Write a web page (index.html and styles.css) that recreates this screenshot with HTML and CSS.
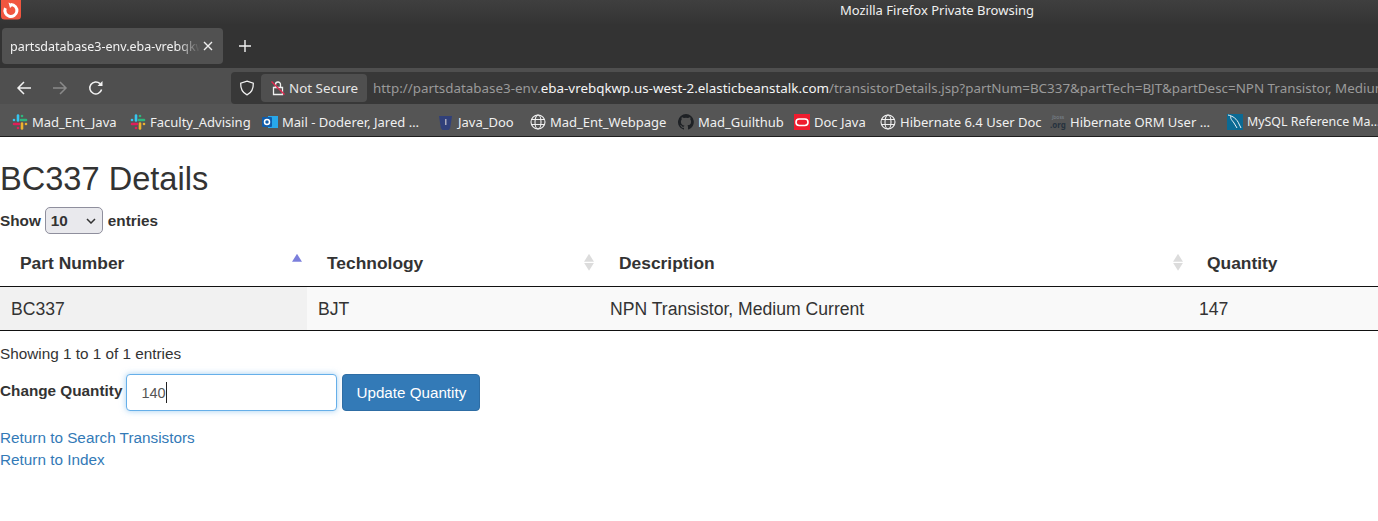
FILE: index.html
```html
<!DOCTYPE html>
<html lang="en">

<head>
    <meta charset="UTF-8">
    <title>partsdatabase3-env.eba-vrebqkwp.us-west-2.elasticbeanstalk.com</title>
    <link rel="stylesheet" href="styles.css">
</head>

<body>
    <header class="browser">
        <div class="titlebar">
            <svg class="app-icon" viewBox="0 0 22 20" width="22" height="20">
                <rect x="1" y="-4" width="20" height="23.5" rx="3.5" fill="#f1563f"/>
                <path d="M11 4.500a6 6 0 1 1-5.600 3.600" fill="none" stroke="#fff" stroke-width="3"/>
                <path d="M8.500 2.500l5 2.200-3.500 3.300z" fill="#fff"/>
            </svg>
            <span class="window-title">Mozilla Firefox Private Browsing</span>
        </div>
        <div class="tabstrip">
            <div class="tab">
                <span class="tab-label">partsdatabase3-env.eba-vrebqkwp.us-west-2.elasticbeanstalk.com</span>
                <svg viewBox="0 0 10 10" width="10" height="10"><path d="M1 1l8 8M9 1l-8 8" stroke="#eee" stroke-width="1.400"/></svg>
            </div>
            <svg class="new-tab" viewBox="0 0 12 12" width="12" height="12"><path d="M6 0v12M0 6h12" stroke="#f2f2f2" stroke-width="1.400"/></svg>
        </div>
        <div class="navbar">
            <svg class="nav-btn" viewBox="0 0 16 16" width="16" height="16"><path d="M15 8H2M8 2L2 8l6 6" fill="none" stroke="#f2f2f2" stroke-width="1.500"/></svg>
            <svg class="nav-btn" viewBox="0 0 16 16" width="16" height="16"><path d="M1 8h13M8 2l6 6-6 6" fill="none" stroke="#8a8a8a" stroke-width="1.500"/></svg>
            <svg class="nav-btn" viewBox="0 0 16 16" width="16" height="16"><path d="M13.600 9.500A6 6 0 1 1 12 3.600" fill="none" stroke="#f2f2f2" stroke-width="1.500"/><path d="M14.500 1v5h-5z" fill="#f2f2f2"/></svg>
            <div class="urlbar">
                <svg class="shield" viewBox="0 0 16 16" width="16" height="16"><path d="M8 1.200l6.300 2c.2 5.500-1.800 9.500-6.300 11.600C3.500 12.700 1.500 8.700 1.700 3.200z" fill="none" stroke="#f0f0f0" stroke-width="1.300"/></svg>
                <div class="not-secure">
                    <svg viewBox="0 0 16 16" width="16" height="16"><path d="M3.500 7.500h9v7h-9zM5.500 7.500V4.500a2.500 2.500 0 0 1 5 0v3" fill="none" stroke="#f0f0f0" stroke-width="1.300"/><path d="M1.500 1.500l13 13" stroke="#e22850" stroke-width="1.400"/></svg>
                    <span>Not Secure</span>
                </div>
                <div class="url">http://partsdatabase3-env.<b>eba-vrebqkwp.us-west-2.elasticbeanstalk.com</b>/transistorDetails.jsp?partNum=BC337&amp;partTech=BJT&amp;partDesc=NPN Transistor, Medium</div>
            </div>
        </div>
        <nav class="bookmarks">
            <a class="mark w-119"><svg viewBox="0 0 16 16" width="16" height="16"><use href="#slack"/></svg>Mad_Ent_Java</a>
            <a class="mark w-132"><svg viewBox="0 0 16 16" width="16" height="16"><use href="#slack"/></svg>Faculty_Advising</a>
            <a class="mark w-176"><svg viewBox="0 0 16 16" width="16" height="16"><rect x="6" y="2" width="10" height="12" fill="#28a8ea"/><rect x="0" y="3" width="10" height="10" rx="1" fill="#0f5cab"/><circle cx="5" cy="8" r="2.500" fill="none" stroke="#fff" stroke-width="1.500"/></svg>Mail - Doderer, Jared …</a>
            <a class="mark w-91"><svg viewBox="0 0 16 16" width="16" height="16"><path d="M1 2h13l-1.500 10a5 5 0 0 1-10 0z" fill="#31407a"/><rect x="7" y="5" width="1.500" height="6" fill="#aab"/></svg>Java_Doo</a>
            <a class="mark w-149"><svg viewBox="0 0 16 16" width="16" height="16"><use href="#globe"/></svg>Mad_Ent_Webpage</a>
            <a class="mark w-116"><svg viewBox="0 0 16 16" width="16" height="16"><path d="M8 0a8 8 0 0 0-2.500 15.600c.4.100.5-.2.500-.4v-1.400c-2.200.5-2.700-1-2.700-1-.4-.9-.9-1.200-.9-1.200-.7-.5.100-.5.100-.5.800.1 1.200.8 1.200.8.700 1.200 1.900.9 2.300.7.100-.5.300-.9.500-1.100-1.800-.2-3.600-.9-3.600-4 0-.9.300-1.600.8-2.100-.1-.2-.4-1 .1-2.100 0 0 .7-.2 2.200.8a7.600 7.600 0 0 1 4 0c1.500-1 2.200-.8 2.200-.8.500 1.100.2 1.900.1 2.100.5.600.8 1.300.8 2.100 0 3.100-1.900 3.700-3.700 3.900.3.300.6.800.6 1.500v2.200c0 .2.100.5.600.4A8 8 0 0 0 8 0z" fill="#1e2125"/></svg>Mad_Guilthub</a>
            <a class="mark w-86"><svg viewBox="0 0 16 16" width="16" height="16"><rect width="16" height="16" fill="#ee1c2e"/><rect x="2" y="5" width="12" height="6.500" rx="3.200" fill="none" stroke="#fff" stroke-width="1.600"/></svg>Doc Java</a>
            <a class="mark w-170"><svg viewBox="0 0 16 16" width="16" height="16"><use href="#globe"/></svg>Hibernate 6.4 User Doc</a>
            <a class="mark w-177"><svg viewBox="0 0 16 16" width="16" height="16"><text x="2" y="5" class="jboss-top">jboss</text><text x="0" y="14" class="jboss-org">.org</text></svg>Hibernate ORM User …</a>
            <a class="mark mark-last"><svg viewBox="0 0 16 16" width="16" height="16"><rect width="16" height="16" fill="#0b6a94"/><path d="M1 1c5 1 9 4 11 9l2 4M4 2c-1 3 1 4 3 7l3 5" fill="none" stroke="#e8f2f6" stroke-width="1"/></svg>MySQL Reference Ma…</a>
        </nav>
        <svg class="defs" width="0" height="0">
            <defs>
                <g id="slack">
                    <path d="M6 1.500v5" stroke="#36c5f0" stroke-width="2.600" stroke-linecap="round"/>
                    <path d="M14 6h-5" stroke="#2eb67d" stroke-width="2.600" stroke-linecap="round"/>
                    <path d="M10 14.500v-5" stroke="#ecb22e" stroke-width="2.600" stroke-linecap="round"/>
                    <path d="M2 10h5" stroke="#e01e5a" stroke-width="2.600" stroke-linecap="round"/>
                    <circle cx="2" cy="6" r="1.300" fill="#36c5f0"/>
                    <circle cx="10" cy="2" r="1.300" fill="#2eb67d"/>
                    <circle cx="14" cy="10" r="1.300" fill="#ecb22e"/>
                    <circle cx="6" cy="14" r="1.300" fill="#e01e5a"/>
                </g>
                <g id="globe" fill="none" stroke="#f0f0f0" stroke-width="1.100">
                    <circle cx="8" cy="8" r="7"/>
                    <ellipse cx="8" cy="8" rx="3" ry="7"/>
                    <path d="M1.500 5.500h13M1.500 10.500h13"/>
                </g>
            </defs>
        </svg>
    </header>

    <main class="page">
        <h1>BC337 Details</h1>
        <label class="length">Show <span class="select">10<svg viewBox="0 0 10 6" width="10" height="6"><path d="M1 1l4 4 4-4" fill="none" stroke="#333" stroke-width="1.500"/></svg></span> entries</label>

        <div class="grid head">
            <div class="th">Part Number<span class="sort up"></span></div>
            <div class="th">Technology<span class="sort"></span></div>
            <div class="th">Description<span class="sort"></span></div>
            <div class="th last">Quantity</div>
        </div>
        <div class="grid row">
            <div class="td sorted">BC337</div>
            <div class="td">BJT</div>
            <div class="td">NPN Transistor, Medium Current</div>
            <div class="td">147</div>
        </div>

        <div class="info">Showing 1 to 1 of 1 entries</div>

        <form class="qty-form">
            <label class="qty-label">Change Quantity</label>
            <div class="qty-input">140<span class="caret"></span></div>
            <button type="button" class="btn">Update Quantity</button>
        </form>

        <a class="link" href="#">Return to Search Transistors</a>
        <a class="link" href="#">Return to Index</a>
    </main>
</body>

</html>
```

FILE: styles.css
```css
* {
    box-sizing: border-box;
}

body {
    margin: 0;
    font-family: "Liberation Sans", Arial, sans-serif;
    font-size: 15.300px;
    color: #333;
    background: #fff;
    overflow: hidden;
}

/* browser chrome */
.browser {
    font-family: "Noto Sans", "Open Sans", sans-serif;
    color: #f2f2f2;
}

.defs {
    display: block;
    position: absolute;
}

.titlebar {
    height: 24px;
    padding-bottom: 4px;
    background: linear-gradient(#3f3f3f, #343434);
    display: flex;
    align-items: center;
    justify-content: center;
    position: relative;
}

.app-icon {
    position: absolute;
    left: 0;
    top: 0;
}

.window-title {
    font-size: 13px;
    margin-left: 496px;
    color: #f0f0f0;
}

.tabstrip {
    height: 44px;
    background: #333;
    padding: 4px 0 4px 2px;
    display: flex;
    align-items: center;
}

.tab {
    width: 221px;
    height: 36px;
    background: #515151;
    border-radius: 4px;
    padding: 0 10px 0 8px;
    display: flex;
    align-items: center;
    font-size: 12.500px;
}

.tab-label {
    width: 190px;
    margin-right: 3px;
    white-space: nowrap;
    overflow: hidden;
    -webkit-mask-image: linear-gradient(to right, #000 88%, transparent);
    mask-image: linear-gradient(to right, #000 88%, transparent);
}

.new-tab {
    margin-left: 16px;
}

.navbar {
    height: 36px;
    background: #4f4f4f;
    display: flex;
    align-items: center;
    padding: 4px 0 0 16px;
}

.nav-btn {
    margin-right: 20px;
    flex-shrink: 0;
}

.urlbar {
    flex: 1;
    height: 32px;
    min-width: 0;
    margin-left: 107px;
    background: #383838;
    border-radius: 4px 0 0 4px;
    display: flex;
    align-items: center;
    padding-left: 8px;
    overflow: hidden;
    white-space: nowrap;
}

.shield {
    flex-shrink: 0;
}

.not-secure {
    display: flex;
    align-items: center;
    gap: 3px;
    height: 28px;
    margin-left: 6px;
    padding: 0 9px;
    background: #4f4f4f;
    border-radius: 4px;
    font-size: 13.400px;
    color: #e6e6e6;
    flex-shrink: 0;
}

.url {
    margin-left: 6px;
    font-size: 13.400px;
    color: #9a9a9a;
}

.url b {
    font-weight: normal;
    color: #f5f5f5;
}

.bookmarks {
    height: 33px;
    background: #555;
    border-bottom: 1px solid #1d1d1d;
    display: flex;
    align-items: center;
    padding: 3px 0 0 12px;
    font-size: 13px;
    white-space: nowrap;
}

.mark {
    display: flex;
    align-items: center;
    gap: 4px;
    color: #f0f0f0;
    flex-shrink: 0;
}

.mark-last {
    font-size: 12.400px;
}

.jboss-top {
    font-size: 5px;
    fill: #7d8690;
}

.jboss-org {
    font-size: 8px;
    font-weight: bold;
    fill: #26323e;
}

.w-119 { width: 118px; }
.w-132 { width: 132px; }
.w-176 { width: 176px; }
.w-91 { width: 92px; }
.w-149 { width: 148px; }
.w-116 { width: 116px; }
.w-86 { width: 86px; }
.w-170 { width: 170px; }
.w-177 { width: 177px; }

/* page */
.page {
    display: flex;
    flex-direction: column;
    align-items: flex-start;
}

h1 {
    margin: 24px 0 10px;
    font-size: 32.600px;
    font-weight: 500;
    line-height: 1.100;
    color: #333;
}

.length {
    display: flex;
    align-items: flex-start;
    gap: 4px;
    font-weight: bold;
    line-height: 28px;
    height: 27px;
}

.select {
    width: 58px;
    height: 27px;
    padding: 2px 6px 0 5px;
    margin-right: 1px;
    background: #e9e9ed;
    border: 1px solid #8f8f9d;
    border-radius: 5px;
    line-height: 20px;
    display: flex;
    align-items: center;
    justify-content: space-between;
}

.grid {
    width: 100%;
    display: grid;
    grid-template-columns: 307px 292px 589px 190px;
}

.head {
    height: 47px;
    margin-top: 6px;
    border-bottom: 1px solid #111;
}

.th {
    position: relative;
    padding: 13px 18px 0 20px;
    font-size: 17.400px;
    font-weight: bold;
    line-height: 20px;
}

.th.last {
    padding-left: 19px;
}

.sort {
    position: absolute;
    right: 5px;
    top: 14px;
    width: 10px;
    height: 17px;
}

.sort::before,
.sort::after {
    content: "";
    position: absolute;
    left: 0;
    width: 10px;
    height: 8px;
    background: #dcdcdc;
}

.sort::before {
    top: 0;
    clip-path: polygon(50% 0, 100% 100%, 0 100%);
}

.sort::after {
    bottom: 0;
    clip-path: polygon(0 0, 100% 0, 50% 100%);
}

.sort.up::before {
    background: #7b7fdc;
}

.sort.up::after {
    display: none;
}

.row {
    height: 44px;
    background: #f9f9f9;
    border-bottom: 1px solid #111;
    font-size: 17.600px;
}

.td {
    padding: 12px 11px 0;
    line-height: 20px;
}

.sorted {
    background: #f1f1f1;
}

.info {
    margin-top: 14px;
    line-height: 18px;
}

.qty-form {
    display: flex;
    align-items: flex-start;
    margin-top: 11px;
}

.qty-label {
    font-weight: bold;
    line-height: 20px;
    margin-top: 7px;
    margin-right: 4px;
}

.qty-input {
    width: 211px;
    height: 37px;
    padding: 1px 14px 0;
    margin-right: 5px;
    background: #fff;
    border: 1px solid #66afe9;
    border-radius: 4px;
    box-shadow: 0 0 6px rgba(102, 175, 233, .6);
    display: flex;
    align-items: center;
    font-size: 14.500px;
    color: #555;
}

.caret {
    width: 1px;
    height: 21px;
    background: #222;
}

.btn {
    width: 138px;
    height: 37px;
    padding: 0;
    background: #337ab7;
    border: 1px solid #2e6da4;
    border-radius: 4px;
    color: #fff;
    font-family: inherit;
    font-size: 15.200px;
}

.link {
    color: #337ab7;
    text-decoration: none;
    line-height: 22px;
}

.qty-form + .link {
    margin-top: 16px;
}
```
